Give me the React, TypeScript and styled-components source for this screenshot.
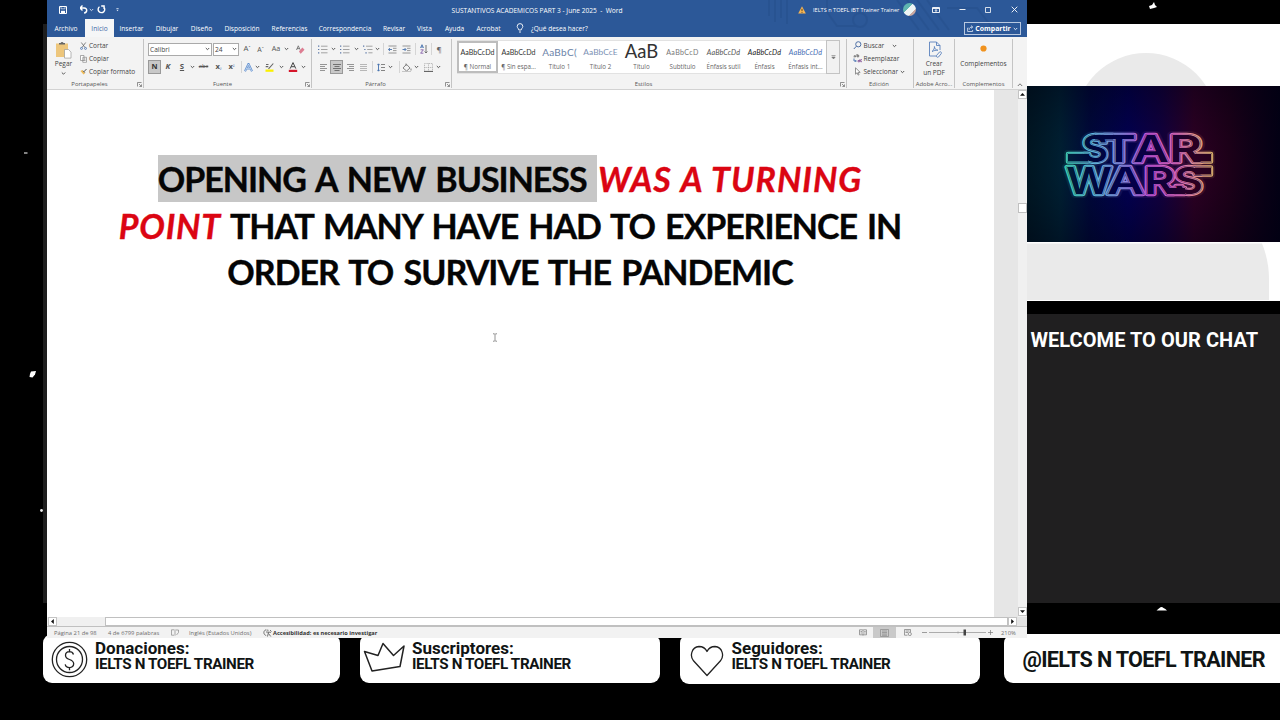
import React from "react";
import styled, { createGlobalStyle, css } from "styled-components";

const Global = createGlobalStyle`
  body { margin: 0; background: #000; overflow: hidden; }
  * { box-sizing: border-box; }
  svg { display: block; flex: none; }
`;

const ui = `"Open Sans", "Noto Sans", sans-serif`;

const Stage = styled.div`
  width: 1280px; height: 720px; overflow: hidden; background: #000;
  display: flex; flex-direction: column; font-family: ${ui};
`;
const Top = styled.div`display: flex; height: 638px; flex: none;`;
const LeftStrip = styled.div`width: 47px; display: flex; justify-content: space-between;`;
const Edge = styled.div`width: 4px; height: 579px; margin-top: 24px; background: #1e1e1e;`;

/* ---------- word processor window ---------- */
const Window = styled.main`
  width: 980px; height: 638px; display: flex; flex-direction: column;
  background: #f3f3f3; position: relative; z-index: 1; color: #444; font-size: 6.6px; white-space: nowrap;
`;
const BlueHead = styled.header`height: 37px; background: #2c5898; color: #fff; position: relative;`;
const Pattern = styled.svg`position: absolute; left: 700px; top: 0;`;
const TitleBar = styled.div`height: 19px; display: flex; align-items: center; position: relative;`;
const TabBar = styled.nav`height: 18px; display: flex; position: relative;`;
const Tab = styled.div<{ $w: number; $active?: boolean }>`
  width: ${p => p.$w}px; height: 18px; line-height: 19px; text-align: center;
  ${p => p.$active && css`background: #f5f6f7; color: #3f67a5;`}
`;
const Ask = styled.div`display: flex; align-items: center; width: 99px; gap: 7px; padding-left: 10px; font-size: 6.5px;`;
const Share = styled.button`
  margin: 3px 6.5px 0 auto; width: 57px; height: 13px; padding: 0 2px; border: 1px solid #b8c8e0; background: none;
  color: #fff; font: 700 6.9px/11px ${ui}; display: flex; align-items: center; justify-content: space-between;
`;

const Slot = styled.div<{ $w: number; $end?: boolean }>`
  width: ${p => p.$w}px; flex: none; display: flex; align-items: ${p => (p.$end ? "flex-end" : "center")}; justify-content: center;
`;
const Title = styled.div`width: 272px; flex: none; text-align: center; font-size: 6.6px; padding-top: 2px; white-space: pre;`;
const UserName = styled.div`width: 95px; flex: none; font-size: 5.6px; padding-left: 5px;`;
const Avatar = styled.div`
  width: 13px; height: 13px; flex: none; border-radius: 50%;
  background: linear-gradient(135deg, #5fb5b0 0 40%, #eef5f5 42% 70%, #c9a9a2 72%);
`;

const Ribbon = styled.section`height: 53px; display: flex; background: #f3f3f3; border-bottom: 1px solid #d2d2d2; padding-top: 2px;`;
const Group = styled.div<{ $w: number }>`
  width: ${p => p.$w}px; height: 49px; flex: none; border-right: 1px solid #c4c4c4;
  display: flex; flex-direction: column;
`;
const GroupBody = styled.div`height: 41px; display: flex;`;
const GroupFoot = styled.div<{ $pad?: number }>`
  height: 8px; line-height: 9px; font-size: 5.9px; text-align: center; color: #555;
  display: flex; justify-content: center; position: relative; padding-right: ${p => p.$pad ?? 0}px;
`;
const Launch = styled.svg`position: absolute; right: 1px; top: 2px;`;
const Stack = styled.div<{ $top?: number }>`display: flex; flex-direction: column; padding-top: ${p => p.$top ?? 0}px;`;
const Command = styled.div`
  height: 13.2px; display: flex; align-items: center; gap: 2px; line-height: 13px; font-size: 6.5px;
`;
const BigButton = styled.div<{ $w: number }>`
  width: ${p => p.$w}px; display: flex; flex-direction: column; align-items: center; padding-top: 2px; line-height: 9px; font-size: 6.5px;
`;
const ToolRow = styled.div`height: 18px; display: flex; align-items: center;`;
const Field = styled.div<{ $w: number }>`
  width: ${p => p.$w}px; height: 13px; background: #fff; border: 1px solid #aaa; padding: 0 1px;
  display: flex; align-items: center; justify-content: space-between; font-size: 6.6px; margin-right: 1px;
`;
const Pressed = styled.div`
  width: 13px; height: 14px; background: #c8c8c8; border: 1px solid #999;
  display: flex; align-items: center; justify-content: center;
`;
const Glyph = styled.span<{ $size?: number; $color?: string; $bold?: boolean; $italic?: boolean; $deco?: string }>`
  font-size: ${p => p.$size ?? 7.8}px; color: ${p => p.$color ?? "#555"}; line-height: 1;
  font-weight: ${p => (p.$bold ? 700 : 400)}; font-style: ${p => (p.$italic ? "italic" : "normal")};
  text-decoration: ${p => p.$deco ?? "none"};
`;
const Divider = styled.div`width: 1px; height: 12px; background: #d5d5d5; flex: none;`;

const Gallery = styled.div`margin: 1px 0 0 5px; height: 34px; display: flex; background: #fff; border-top: 1px solid #e2e2e2; border-bottom: 1px solid #e2e2e2;`;
const StyleCard = styled.div<{ $on?: boolean }>`
  width: 41px; height: 32px; display: flex; flex-direction: column; justify-content: space-between;
  overflow: hidden; text-align: center; padding: 0 1px 1px;
  ${p => p.$on && css`outline: 2px solid #bdbdbd; outline-offset: -2px;`}
`;
const Sample = styled.div<{ $size: number; $color: string; $italic?: boolean; $ls?: number; $up?: number }>`
  height: 21px; line-height: ${p => 23 - (p.$up ?? 0)}px; font-family: Lato, sans-serif; font-size: ${p => p.$size}px; color: ${p => p.$color};
  font-style: ${p => (p.$italic ? "italic" : "normal")}; letter-spacing: ${p => p.$ls ?? 0}px; overflow: hidden;
`;
const SampleName = styled.div`font-size: 6.2px; line-height: 9px; height: 10px; color: #666;`;
const GalleryMore = styled.div`width: 14px; height: 34px; margin-top: -1px; border: 1px solid #c3c3c3; background: #f1f1f1; display: flex; align-items: center; justify-content: center;`;

const DocArea = styled.div`height: 527px; display: flex; background: #e6e6e6;`;
const Page = styled.article`width: 947px; background: #fff; padding: 65px 21px 0 0;`;
const Line = styled.p<{ $ls: number }>`
  margin: 0; height: 46.6px; line-height: 48px; text-align: center; color: #050505;
  font-family: Lato, Carlito, sans-serif; font-weight: 700; font-size: 34px; -webkit-text-stroke: 0.35px currentColor;
  letter-spacing: ${p => p.$ls}px; word-spacing: 3px; white-space: pre;
`;
const Marked = styled.span`background: #c7c7c7; display: inline-block; height: 46.6px; vertical-align: top; margin-right: 1px;`;
const Red = styled.em<{ $ls: number }>`color: #db0512; letter-spacing: ${p => p.$ls}px; word-spacing: 1.2px;`;
const Caret = styled.svg`margin: 38px 0 0 445px;`;
const VScroll = styled.div`width: 9px; margin-left: auto; background: #f0f0f0; display: flex; flex-direction: column;`;
const ScrollButton = styled.div<{ $top?: number }>`
  width: 9px; height: 9px; margin-top: ${p => p.$top ?? 0}px; background: #fff; border: 1px solid #c4c4c4;
  display: flex; align-items: center; justify-content: center; flex: none;
`;
const Thumb = styled.div`width: 9px; height: 10px; margin-top: 104px; background: #fff; border: 1px solid #c0c0c0;`;
const HScroll = styled.div`height: 10px; display: flex; padding-left: 1px; background: #f0f0f0; border-bottom: 1px solid #c0c0c0;`;
const HThumb = styled.div`width: 903px; margin-left: 48px; height: 9px; background: #fff; border: 1px solid #c0c0c0;`;
const Corner = styled.div`flex: 1; background: #e3e3e3;`;
const Status = styled.footer`height: 11px; display: flex; align-items: center; background: #f2f2f2; font-size: 5.8px; color: #6d6d6d; padding-left: 7px;`;
const StatusItem = styled.span<{ $w: number; $bold?: boolean }>`
  width: ${p => p.$w}px; flex: none; ${p => p.$bold && css`font-weight: 700; color: #333; font-size: 5.65px;`}
`;
const ViewOn = styled(Slot)`height: 11px; background: #c9c9c9;`;

/* ---------- stream overlay ---------- */
const Side = styled.aside`width: 253px; display: flex; flex-direction: column;`;
const Chat = styled.section`
  margin-top: 13px; height: 289px; background: #201f20; color: #fff; padding: 14px 0 0 3.5px;
  font: 700 20px/24px Roboto, sans-serif; white-space: nowrap; letter-spacing: 0.05px;
`;
const Cards = styled.div`display: flex; margin: -4px 0 0 43px; align-items: flex-start;`;
const Card = styled.section<{ $w: number; $gap?: number; $h?: number }>`
  width: ${p => p.$w}px; height: ${p => p.$h ?? 49}px; flex: none; margin-left: ${p => p.$gap ?? 0}px;
  background: #fff; border-radius: 9px; display: flex; color: #101414; font-family: Roboto, sans-serif;
  font-weight: 700; white-space: nowrap;
`;
const CardIcon = styled.div<{ $w: number; $x: number; $y: number }>`width: ${p => p.$w}px; padding: ${p => p.$y}px 0 0 ${p => p.$x}px; flex: none;`;
const CardText = styled.div<{ $top: number }>`padding-top: ${p => p.$top}px;`;
const CardTitle = styled.div<{ $h: number }>`font-size: 17px; height: ${p => p.$h}px; line-height: 16px;`;
const CardName = styled.div`font-size: 15.2px; line-height: 16px; letter-spacing: -0.38px;`;
const Handle = styled.div`font-size: 21.6px; letter-spacing: -0.65px; line-height: 26px; padding: 13px 0 0 18.5px;`;

const Down = ({ c = "#555" }: { c?: string }) => (
  <svg width="5" height="4" viewBox="0 0 5 4"><path d="M.8 1l1.700 1.700L4.200 1" fill="none" stroke={c} strokeWidth="1" /></svg>
);
const Arrow = ({ r }: { r: number }) => (
  <svg width="5" height="5" viewBox="0 0 5 5"><path d="M0 3.800h5L2.500 1z" fill="#111" transform={`rotate(${r} 2.5 2.5)`} /></svg>
);
const Corner45 = () => (
  <Launch width="5" height="5" viewBox="0 0 5 5"><path d="M.5 4.500v-4h4M2 2l2.300 2.300M4.500 2.400v2.100H2.400" fill="none" stroke="#666" strokeWidth=".7" /></Launch>
);
const Lines = ({ rows, c = "#8a8a8a", w = 8 }: { rows: [number, number][]; c?: string; w?: number }) => (
  <svg width={w} height="9" viewBox={`0 0 ${w} 9`}>
    {rows.map(([x, l], i) => <path key={i} d={`M${x} ${1.5 + i * 2}h${l}`} stroke={c} strokeWidth=".9" />)}
  </svg>
);
const ListIcon = ({ step = 0 }: { step?: number }) => (
  <svg width="10" height="9" viewBox="0 0 10 9">
    {[1.2, 4.5, 7.8].map((y, i) => (
      <g key={y}><path d={`M${i * step} ${y}h1.300`} stroke="#5c79a8" strokeWidth="1.200" /><path d={`M${3 + i * step} ${y}H9.500`} stroke="#8e8e8e" strokeWidth=".8" /></g>
    ))}
  </svg>
);
const Indent = ({ flip }: { flip?: boolean }) => (
  <svg width="9" height="9" viewBox="0 0 9 9">
    <path d="M.5 1h8M.5 8h8M5 3.300h3.500M5 5.600h3.500" stroke="#8c8c8c" strokeWidth=".9" />
    <path d={flip ? "M.5 4.500h3.300M2.600 3l1.400 1.500L2.600 6" : "M4 4.500H.7M1.900 3L.5 4.500 1.900 6"} fill="none" stroke="#4470ae" strokeWidth=".9" />
  </svg>
);

const samples: { name: string; text: string; size: number; color: string; italic?: boolean; ls?: number; on?: boolean; up?: number }[] = [
  { name: "¶ Normal", text: "AaBbCcDd", size: 7.1, color: "#333", on: true },
  { name: "¶ Sin espa...", text: "AaBbCcDd", size: 7.1, color: "#333" },
  { name: "Título 1", text: "AaBbC(", size: 10, color: "#6b83a8", ls: 0.3 },
  { name: "Título 2", text: "AaBbCcE", size: 8.4, color: "#7c91b4", ls: 0.05 },
  { name: "Título", text: "AaB", size: 18.5, color: "#333", up: 3 },
  { name: "Subtítulo", text: "AaBbCcD", size: 7.1, color: "#777", ls: 0.35 },
  { name: "Énfasis sutil", text: "AaBbCcDd", size: 7.2, color: "#555", italic: true, ls: 0.1 },
  { name: "Énfasis", text: "AaBbCcDd", size: 7.2, color: "#222", italic: true, ls: 0.1 },
  { name: "Énfasis int...", text: "AaBbCcDd", size: 7.2, color: "#4a6fb5", italic: true, ls: 0.1 },
];

const tabs: [string, number][] = [["Archivo", 38], ["Inicio", 29], ["Insertar", 35], ["Dibujar", 36], ["Diseño", 33], ["Disposición", 48], ["Referencias", 47], ["Correspondencia", 64], ["Revisar", 34], ["Vista", 27], ["Ayuda", 33], ["Acrobat", 35]];

const Head = () => (
  <BlueHead>
    <Pattern width="280" height="37" viewBox="0 0 280 37">
      <g stroke="#234a86" strokeWidth="2" fill="none" opacity=".35">
        <path d="M22 0v16M28 0v22M34 0v18M40 0v24M80 0v12l10 14h20M150 0l22 30M160 0l22 30M170 0l22 30M180 0l22 30" />
        <circle cx="113" cy="20" r="7" /><path d="M200 8h30l14 18" />
      </g>
    </Pattern>
    <TitleBar>
      <Slot $w={32}><svg width="8" height="8" viewBox="0 0 8 8"><path d="M.5.500h7v7h-7z" fill="none" stroke="#fff" /><path d="M2 4.800h4V8H2z" fill="#fff" /><path d="M2 .5v2.300h4V.5" fill="none" stroke="#fff" strokeWidth=".6" /></svg></Slot>
      <Slot $w={1} />
      <Slot $w={8}><svg width="9" height="9" viewBox="0 0 9 9" fill="none" stroke="#fff" strokeWidth="1.400"><path d="M3.500.600L1.100 3l2.400 2.400M1.300 3h3.800c3.700 0 3.300 4.700 0 5" transform="translate(-1 0)" /></svg></Slot>
      <Slot $w={6}><Down c="#cfdaec" /></Slot>
      <Slot $w={15}><svg width="9" height="9" viewBox="0 0 9 9" fill="none" stroke="#fff" strokeWidth="1.400"><path d="M2.500 1.700a3.300 3.300 0 1 0 4 .1M4.200 1h2.900v3" /></svg></Slot>
      <Slot $w={16}><svg width="3" height="4" viewBox="0 0 4 5" fill="#dce5f2"><path d="M.5 0h3v1h-3zM.5 2h3L2 4z" /></svg></Slot>
      <Slot $w={276} />
      <Title>{"SUSTANTIVOS ACADEMICOS PART 3 - June 2025  -  Word"}</Title>
      <Slot $w={123} />
      <Slot $w={12}><svg width="8" height="8" viewBox="0 0 8 8"><path d="M4 .3L7.800 7.500H.2z" fill="#f5b455" /><path d="M4 2.800v2.400M4 6v.8" stroke="#4d3a17" strokeWidth=".9" /></svg></Slot>
      <UserName>IELTS n TOEFL iBT Trainer Trainer</UserName>
      <Avatar />
      <Slot $w={39}><svg width="8" height="6" viewBox="0 0 8 6" fill="none" stroke="#fff" strokeWidth=".9"><path d="M.5.500h7v5h-7zM.5 1.500h7M4 5V2.700M3 3.700l1-1 1 1" /></svg></Slot>
      <Slot $w={14}><svg width="7" height="7" viewBox="0 0 7 7"><path d="M.5 3.500h6" stroke="#fff" strokeWidth=".9" /></svg></Slot>
      <Slot $w={38}><svg width="6" height="6" viewBox="0 0 6 6"><path d="M.5.500h5v5h-5z" fill="none" stroke="#fff" strokeWidth=".8" /></svg></Slot>
      <Slot $w={14}><svg width="7" height="7" viewBox="0 0 7 7"><path d="M.7.700l5.600 5.600M6.300.700L.7 6.300" stroke="#fff" strokeWidth=".9" /></svg></Slot>
    </TitleBar>
    <TabBar>
      {tabs.map(([t, w]) => <Tab key={t} $w={w} $active={t === "Inicio"}>{t}</Tab>)}
      <Ask>
        <svg width="8" height="10" viewBox="0 0 8 10" fill="none" stroke="#fff" strokeWidth=".9"><path d="M2.800 7C2.800 5.500 1.200 5 1.200 3.400a2.800 2.800 0 0 1 5.600 0C6.800 5 5.200 5.500 5.200 7zM3 9h2" /></svg>
        ¿Qué desea hacer?
      </Ask>
      <Share>
        <svg width="7" height="7" viewBox="0 0 7 7" fill="none" stroke="#dce6f4" strokeWidth=".8"><path d="M1.500 3H.6v3.500h5V5M2.200 4.800c0-2 1.200-2.800 3-2.800M4 .6L5.800 2 4 3.500" /></svg>
        Compartir<Down c="#dce6f4" />
      </Share>
    </TabBar>
  </BlueHead>
);

const Clipboard = () => (
  <Group $w={97}>
    <GroupBody>
      <BigButton $w={33}>
        <svg width="17" height="18" viewBox="0 0 17 18"><path d="M1 2.500h12V16H1z" fill="#edc67c" /><path d="M4 3.500V2h1.600a1.500 1.500 0 0 1 2.900 0H10v1.500z" fill="#666" /><path d="M9.500 8.500h4l2.500 2.600v6H9.500z" fill="#fff" stroke="#999" strokeWidth=".7" /></svg>
        Pegar
        <Slot $w={6}><svg width="5" height="8" viewBox="0 0 5 8"><path d="M.8 4.500l1.700 1.700 1.700-1.700" fill="none" stroke="#555" /></svg></Slot>
      </BigButton>
      <Stack>
        <Command><svg width="7" height="8" viewBox="0 0 7 8" fill="none" stroke="#666" strokeWidth=".8"><path d="M1.300.500L5 5.500M5.700.500L2 5.500" /><circle cx="1.500" cy="6.400" r="1" stroke="#4470ae" /><circle cx="5.500" cy="6.400" r="1" stroke="#4470ae" /></svg>Cortar</Command>
        <Command><svg width="7" height="8" viewBox="0 0 7 8" fill="#fff" stroke="#888" strokeWidth=".7"><path d="M.5.500h3.500v5H.5zM2.800 2.300H6.500v5H2.800zM3.800 4h1.800M3.800 5.500h1.800" /></svg>Copiar</Command>
        <Command><svg width="7" height="8" viewBox="0 0 7 8"><path d="M.5 3l3 3.500L5 5.300 2.300 2z" fill="#eebb58" /><path d="M3.200 2.800L4.800 4.600M4 3.700L6.500 1" stroke="#555" strokeWidth="1" /></svg>Copiar formato</Command>
      </Stack>
    </GroupBody>
    <GroupFoot $pad={11}>Portapapeles<Corner45 /></GroupFoot>
  </Group>
);

const FontGroup = () => (
  <Group $w={168}>
    <GroupBody>
      <Stack $top={1}>
        <ToolRow>
          <Slot $w={4} />
          <Field $w={64}>Calibri<Down /></Field>
          <Field $w={26}>24<Down /></Field>
          <Slot $w={14}><Glyph>A</Glyph><Glyph $size={5}>ˆ</Glyph></Slot>
          <Slot $w={13}><Glyph $size={7}>A</Glyph><Glyph $size={5}>ˇ</Glyph></Slot>
          <Slot $w={18}><Glyph $size={7.2}>Aa</Glyph></Slot>
          <Slot $w={2}><Down /></Slot>
          <Slot $w={26}><svg width="9" height="9" viewBox="0 0 9 9"><path d="M3 6.200l3.400-3.600L8.500 4.800 5 8.400H4.200z" fill="#dd7d92" /><path d="M.5 5L2.300.800 4 4.600M1 3.600h2.500" stroke="#666" strokeWidth=".8" fill="none" /></svg></Slot>
        </ToolRow>
        <ToolRow>
          <Slot $w={4} />
          <Pressed><Glyph $bold $color="#333" $size={7.4}>N</Glyph></Pressed>
          <Slot $w={14}><Glyph $bold $italic>K</Glyph></Slot>
          <Slot $w={14}><Glyph $bold $deco="underline">S</Glyph></Slot>
          <Slot $w={6}><Down /></Slot>
          <Slot $w={17}><Glyph $size={5.8} $deco="line-through">abc</Glyph></Slot>
          <Slot $w={13}><Glyph $bold $size={7.6}>x</Glyph><Glyph $size={5} $color="#4470ae">₂</Glyph></Slot>
          <Slot $w={13}><Glyph $bold $size={7.6}>x</Glyph><Glyph $size={5} $color="#4470ae">²</Glyph></Slot>
          <Slot $w={3} /><Divider />
          <Slot $w={13}><svg width="9" height="9" viewBox="0 0 9 9"><path d="M1 8.200L4.500.800 8 8.200M2.400 5.600h4.200" fill="none" stroke="#5f8fd0" strokeWidth="2" /><path d="M1.200 8L4.500 1 7.800 8M2.600 5.600h3.800" fill="none" stroke="#eef3fa" strokeWidth=".6" /></svg></Slot>
          <Slot $w={4}><Down /></Slot>
          <Slot $w={21}><svg width="10" height="10" viewBox="0 0 10 10"><path d="M.5 7.500h8v2.300h-8z" fill="#fbf000" /><path d="M3.500 6.800l4.800-5.300M.7 4.600h2.600M1 2.500h2.500" stroke="#666" strokeWidth="1.100" /></svg></Slot>
          <Slot $w={3}><Down /></Slot>
          <Slot $w={19}><svg width="10" height="10" viewBox="0 0 10 10"><path d="M.8 7.800h8.400V10H.8z" fill="#d5162b" /><path d="M2.200 6.600L5 .6l2.800 6M3.200 4.700h3.600" fill="none" stroke="#444" strokeWidth="1" /></svg></Slot>
          <Slot $w={3}><Down /></Slot>
        </ToolRow>
      </Stack>
    </GroupBody>
    <GroupFoot $pad={10}>Fuente<Corner45 /></GroupFoot>
  </Group>
);

const Paragraph = () => (
  <Group $w={140}>
    <GroupBody>
      <Stack $top={1}>
        <ToolRow>
          <Slot $w={5} />
          <Slot $w={12}><ListIcon /></Slot><Slot $w={9}><Down /></Slot>
          <Slot $w={14}><ListIcon /></Slot><Slot $w={8}><Down /></Slot>
          <Slot $w={15}><ListIcon step={1.2} /></Slot><Slot $w={5}><Down /></Slot>
          <Slot $w={3} /><Divider />
          <Slot $w={16}><Indent /></Slot><Slot $w={12}><Indent flip /></Slot>
          <Slot $w={3} /><Divider />
          <Slot $w={15}><svg width="8" height="10" viewBox="0 0 8 10" fill="none" strokeWidth=".9"><path d="M.5 4L2 .7 3.500 4M1 3h2" stroke="#4470ae" /><path d="M.6 5.800h2.800L.6 9.200h2.800" stroke="#8660a8" /><path d="M6 1v8M4.600 7.500L6 9l1.400-1.500" stroke="#666" /></svg></Slot>
          <Divider />
          <Slot $w={14}><Glyph $size={8} $color="#666">¶</Glyph></Slot>
        </ToolRow>
        <ToolRow>
          <Slot $w={4} />
          <Slot $w={14}><Lines rows={[[0, 7], [0, 5], [0, 7], [0, 5]]} w={7} /></Slot>
          <Pressed><Lines rows={[[0, 8], [1.5, 5], [0, 8], [1.5, 5]]} c="#666" /></Pressed>
          <Slot $w={14}><Lines rows={[[0, 7], [2, 5], [0, 7], [2, 5]]} w={7} /></Slot>
          <Slot $w={13}><Lines rows={[[0, 7], [0, 7], [0, 7], [0, 7]]} c="#b0b0b0" w={7} /></Slot>
          <Slot $w={2} /><Divider />
          <Slot $w={15}><svg width="8" height="9" viewBox="0 0 8 9" fill="none"><path d="M1.500 1v7M.3 2.200L1.500.800l1.200 1.400M.3 6.800l1.200 1.400 1.200-1.400" stroke="#4470ae" strokeWidth=".9" /><path d="M4 1.500h4M4 4.500h4M4 7.500h4" stroke="#777" strokeWidth=".9" /></svg></Slot>
          <Slot $w={5}><Down /></Slot>
          <Slot $w={6} /><Divider />
          <Slot $w={13}><svg width="10" height="9" viewBox="0 0 10 9" fill="none" stroke="#777" strokeWidth=".9"><path d="M1 5l3.500-3.700L8 5 4.600 8zM4 3V.5M9 5.500v2" /><path d="M0 8.600h9" stroke="#bbb" /></svg></Slot>
          <Slot $w={7}><Down /></Slot>
          <Slot $w={16}><svg width="9" height="9" viewBox="0 0 9 9" fill="none"><path d="M.5 8.500v-8h8v8M4.500.500v8M.5 4.500h8" stroke="#a5a5a5" strokeWidth=".8" strokeDasharray="1 .8" /><path d="M0 8.400h9" stroke="#555" strokeWidth="1" /></svg></Slot>
          <Slot $w={5}><Down /></Slot>
        </ToolRow>
      </Stack>
    </GroupBody>
    <GroupFoot $pad={12}>Párrafo<Corner45 /></GroupFoot>
  </Group>
);

const Styles = () => (
  <Group $w={395}>
    <GroupBody>
      <Gallery>
        {samples.map(s => (
          <StyleCard key={s.name} $on={s.on}>
            <Sample $size={s.size} $color={s.color} $italic={s.italic} $ls={s.ls} $up={s.up}>{s.text}</Sample>
            <SampleName>{s.name}</SampleName>
          </StyleCard>
        ))}
        <GalleryMore><svg width="5" height="5" viewBox="0 0 5 5"><path d="M.5.500h4M.8 2l1.700 2 1.700-2z" stroke="#777" strokeWidth=".6" fill="#777" /></svg></GalleryMore>
      </Gallery>
    </GroupBody>
    <GroupFoot $pad={11}>Estilos<Corner45 /></GroupFoot>
  </Group>
);

const Editing = () => (
  <Group $w={67}>
    <GroupBody>
      <Slot $w={5.5} />
      <Stack>
        <Command><svg width="9" height="9" viewBox="0 0 9 9" fill="none" stroke="#4d6fa6" strokeWidth="1"><circle cx="5.300" cy="3.300" r="2.600" /><path d="M3.400 5.200L.8 8" /></svg>Buscar<Slot $w={17}><Down /></Slot></Command>
        <Command><svg width="9" height="9" viewBox="0 0 9 9" fill="none" strokeWidth=".9"><path d="M.6 2.800h2v-1H.9M4 0v2.800h1.700V1.200H4" stroke="#666" /><path d="M1 4.500V7h2M2.400 6l.9 1-.9 1" stroke="#4470ae" /><path d="M6.500 5.500v2.300H5V6.500h1.500M9 5.700H7.600v2H9" stroke="#8a5a9a" /></svg>Reemplazar</Command>
        <Command><svg width="9" height="9" viewBox="0 0 9 9" fill="#fff" stroke="#777" strokeWidth=".8"><path d="M2.500.800v6.400l1.600-1.500 1 2.400 1-.5-1-2.200h2.100z" /></svg>Seleccionar<Down /></Command>
      </Stack>
    </GroupBody>
    <GroupFoot $pad={2}>Edición</GroupFoot>
  </Group>
);

const RibbonBar = () => (
  <Ribbon>
    <Clipboard /><FontGroup /><Paragraph /><Styles /><Editing />
    <Group $w={41}>
      <GroupBody>
        <BigButton $w={41}>
          <svg width="16" height="18" viewBox="0 0 16 18" fill="none" stroke="#5b82bd" strokeWidth=".9"><path d="M10.500 15H3.500V1h7l3.500 3.500V9M10.500 1v3.500H14" /><path d="M6 10.500c2-1.500 2.600-3.500 2.400-5 .2 2.500 1.600 3.500 3.500 3.700-2 0-4 .3-5.900 1.300z" /><path d="M10.500 14.500l3-3.500c1-1 2.500.5 1.700 1.700L12.500 16c-1.200 1-2.600-.6-2-1.500z" /></svg>
          Crear<span>un PDF</span>
        </BigButton>
      </GroupBody>
      <GroupFoot>Adobe Acro...</GroupFoot>
    </Group>
    <Group $w={58}>
      <GroupBody>
        <BigButton $w={57}>
          <svg width="16" height="18" viewBox="0 0 16 18"><circle cx="7.500" cy="7.500" r="3.100" fill="#f0921e" /></svg>
          Complementos
        </BigButton>
      </GroupBody>
      <GroupFoot>Complementos</GroupFoot>
    </Group>
    <Slot $w={14} $end><svg width="6" height="7" viewBox="0 0 6 7"><path d="M.8 4L3 1.800 5.200 4" fill="none" stroke="#666" strokeWidth=".9" /></svg></Slot>
  </Ribbon>
);

const Document = () => (
  <>
    <DocArea>
      <Page>
        <Line $ls={-1}><Marked>{"OPENING A NEW BUSINESS "}</Marked><Red $ls={1}>WAS A TURNING</Red></Line>
        <Line $ls={-1.08}><Red $ls={0.75}>POINT</Red>{" THAT MANY HAVE HAD TO EXPERIENCE IN"}</Line>
        <Line $ls={-0.98}>ORDER TO SURVIVE THE PANDEMIC</Line>
        <Caret width="6" height="9" viewBox="0 0 6 9"><path d="M1 .8h1.500L3 1.300l.5-.5H5M3 1.300v6.400M1 8.200h1.500L3 7.700l.5.500H5" fill="none" stroke="#777" strokeWidth=".8" /></Caret>
      </Page>
      <VScroll>
        <ScrollButton><Arrow r={0} /></ScrollButton>
        <Thumb />
        <ScrollButton $top={394}><Arrow r={180} /></ScrollButton>
      </VScroll>
    </DocArea>
    <HScroll>
      <ScrollButton><Arrow r={-90} /></ScrollButton>
      <HThumb />
      <ScrollButton><Arrow r={90} /></ScrollButton>
      <Corner />
    </HScroll>
    <Status>
      <StatusItem $w={54}>Página 21 de 98</StatusItem>
      <StatusItem $w={63}>4 de 6799 palabras</StatusItem>
      <StatusItem $w={18}><svg width="8" height="7" viewBox="0 0 8 7" fill="none" stroke="#888" strokeWidth=".7"><path d="M3 .8H.5v5.400H3M4 .3v6.400M5 1h2.500v2.500L5.500 6" /></svg></StatusItem>
      <StatusItem $w={74}>Inglés (Estados Unidos)</StatusItem>
      <StatusItem $w={10}><svg width="9" height="8" viewBox="0 0 9 8" fill="none" stroke="#555" strokeWidth=".8"><path d="M3 .8C0 1.500.3 6 3.200 6.500M3.500 1l2 .3M3 3l5 .300M5.500 3.200L4.500 7.500M5.500 4.500l2.300 3M7 1l1.500 1.500" /></svg></StatusItem>
      <StatusItem $w={580} $bold>Accesibilidad: es necesario investigar</StatusItem>
      <Slot $w={20}><svg width="8" height="7" viewBox="0 0 8 7" fill="none" stroke="#777" strokeWidth=".7"><path d="M4 1v5.500M.5.800h3L4 1l.5-.2h3v5h-3L4 6.200l-.5-.4h-3zM1.500 2.500h1.500M1.500 4h1.500M5.200 2.500h1.500M5.200 4h1.500" /></svg></Slot>
      <ViewOn $w={23}><svg width="9" height="8" viewBox="0 0 9 8" fill="none" stroke="#8a8a8a" strokeWidth=".7"><path d="M.5.500h8v7h-8zM2 2h5M2 3.500h5M2 5h5M2 6.300h5" /></svg></ViewOn>
      <Slot $w={23}><svg width="8" height="7" viewBox="0 0 8 7" fill="none" stroke="#777" strokeWidth=".7"><path d="M.5 6.200V.500h6v2.500M1.500 2h4M1.500 3.500h2.500M.5 6.200h3" /><circle cx="5.800" cy="5" r="1.600" /></svg></Slot>
      <Slot $w={77}><svg width="72" height="7" viewBox="0 0 72 7"><path d="M0 3.500h5M66 3.500h5M68.500 1v5" stroke="#777" strokeWidth=".7" /><path d="M7 3.500h57M36 2.500v2" stroke="#999" strokeWidth=".8" /><path d="M41.500 .5h2.500v6h-2.500z" fill="#444" /></svg></Slot>
      <Slot $w={5} />
      <StatusItem $w={20}>210%</StatusItem>
    </Status>
  </>
);

type Letter = [string, number, number, number];
const letters: Letter[] = [
  ["S", 55, 75.5, 26], ["T", 75, 75.5, 34], ["A", 106, 75.5, 36], ["R", 142, 75.5, 33],
  ["W", 39, 108, 46], ["A", 80, 108, 37], ["R", 117, 108, 31], ["S", 147, 108, 29],
];

const NeonPicture = () => (
  <svg width="253" height="156" viewBox="0 0 253 156">
    <defs>
      <linearGradient id="sky" gradientUnits="userSpaceOnUse" x1="0" y1="0" x2="253" y2="0">
        <stop offset="0" stopColor="#001f2a" /><stop offset=".13" stopColor="#002538" /><stop offset=".25" stopColor="#00083c" />
        <stop offset=".4" stopColor="#02004b" /><stop offset=".53" stopColor="#10003a" /><stop offset=".66" stopColor="#2a0022" />
        <stop offset=".8" stopColor="#1f0019" /><stop offset="1" stopColor="#040016" />
      </linearGradient>
      <radialGradient id="fade" cx=".5" cy=".5" r=".75"><stop offset=".3" stopColor="#000010" stopOpacity="0" /><stop offset="1" stopColor="#000010" stopOpacity=".6" /></radialGradient>
      <linearGradient id="neon" gradientUnits="userSpaceOnUse" x1="39" y1="80" x2="186" y2="70">
        <stop offset="0" stopColor="#3fd9b5" /><stop offset=".2" stopColor="#62b8de" /><stop offset=".4" stopColor="#8a85e0" />
        <stop offset=".55" stopColor="#c455d8" /><stop offset=".75" stopColor="#e068bc" /><stop offset=".9" stopColor="#e59a8a" /><stop offset="1" stopColor="#e5b866" />
      </linearGradient>
      <g id="mark">
        <path d="M41 68h20v7.500H41zM168 68h16v7.500h-16zM168 81.500h16v7h-16zM68 49h18v4.500H68zM140 102h18v6h-18z" />
        {letters.map(([t, x, y, w], i) => (
          <text key={i} x={x} y={y} textLength={w} lengthAdjust="spacingAndGlyphs" fontFamily="Inter, sans-serif" fontWeight="600" fontSize="37">{t}</text>
        ))}
      </g>
    </defs>
    <rect width="253" height="156" fill="url(#sky)" />
    <rect width="253" height="156" fill="url(#fade)" />
    <g strokeLinejoin="round">
      <use href="#mark" fill="none" stroke="url(#neon)" strokeWidth="8" opacity=".1" />
      <use href="#mark" fill="none" stroke="url(#neon)" strokeWidth="4.400" />
      <use href="#mark" fill="none" stroke="#1b0f50" strokeOpacity=".5" strokeWidth="2.400" />
      <use href="#mark" fill="none" stroke="url(#neon)" strokeWidth="1" />
      <use href="#mark" fill="url(#sky)" />
    </g>
  </svg>
);

export default function App() {
  return (
    <Stage>
      <Global />
      <Top>
        <LeftStrip>
          <svg width="43" height="620" viewBox="0 0 43 620">
            <path d="M24 153h3.500" stroke="#bbb" strokeWidth="1.400" />
            <path d="M31 371.500l5-.5-1 3.500-2.500 3-3-.5.500-3z" fill="#fff" />
            <circle cx="41.500" cy="510.500" r="1.400" fill="#eee" />
          </svg>
          <Edge />
        </LeftStrip>
        <Window><Head /><RibbonBar /><Document /></Window>
        <Side>
          <svg width="253" height="86" viewBox="0 0 253 86">
            <path d="M122 6l3-1 2-3 1 3 2 2-3 1-4 1z" fill="#fff" />
            <rect y="24" width="253" height="62" fill="#fff" /><circle cx="119" cy="124" r="71" fill="#eaeaea" />
          </svg>
          <NeonPicture />
          <svg width="253" height="59" viewBox="0 0 253 59"><rect width="253" height="59" fill="#fff" /><path d="M0 1.500h235q7 17 7 36v20.500H0z" fill="#eaeaea" /></svg>
          <Chat>WELCOME TO OUR CHAT</Chat>
          <svg width="253" height="14" viewBox="0 0 253 14"><path d="M129.500 7.500q2-2 3-2.500 2-2 4 0 2 .5 3.500 2.500z" fill="#fff" /></svg>
        </Side>
      </Top>
      <Cards>
        <Card $w={296.5}>
          <CardIcon $w={52} $x={8} $y={7}>
            <svg width="37" height="37" viewBox="0 0 37 37" fill="none" stroke="#222" strokeWidth="1.300"><circle cx="18.500" cy="18.500" r="17.200" /><circle cx="18.500" cy="18.500" r="13" /><path d="M22.500 13.500q-1-2.800-4-2.800-4 .2-4 3.600 0 3 4 4.200t4.200 4.300q-.2 3.700-4.200 3.800-3.600 0-4.300-3.300M18.500 8v2.700M18.500 26.600v2.600" /></svg>
          </CardIcon>
          <CardText $top={5.5}><CardTitle $h={16.5}>Donaciones:</CardTitle><CardName>IELTS N TOEFL TRAINER</CardName></CardText>
        </Card>
        <Card $w={300} $gap={20.5}>
          <CardIcon $w={52} $x={3} $y={8}>
            <svg width="43" height="32" viewBox="0 0 43 32" fill="none" stroke="#222" strokeWidth="1.500"><path d="M1.500 9.500l13.500 4 5-12 10.500 12L41 4l-4 20.500L9 29z" strokeLinejoin="round" /></svg>
          </CardIcon>
          <CardText $top={5.5}><CardTitle $h={16.5}>Suscriptores:</CardTitle><CardName>IELTS N TOEFL TRAINER</CardName></CardText>
        </Card>
        <Card $w={300} $gap={19.5} $h={50}>
          <CardIcon $w={52} $x={10} $y={11}>
            <svg width="34" height="32" viewBox="0 0 34 32" fill="none" stroke="#222" strokeWidth="1.300"><path d="M17 30.500L3.500 15.800C-.5 11 1.500 2.200 9 1.500c4 0 6.500 2 8 5 1.500-3 4-5 8-5 7.500.700 9.500 9.500 5.500 14.300z" strokeLinejoin="round" /></svg>
          </CardIcon>
          <CardText $top={6}><CardTitle $h={16}>Seguidores:</CardTitle><CardName>IELTS N TOEFL TRAINER</CardName></CardText>
        </Card>
        <Card $w={290} $gap={24.5}><Handle>@IELTS N TOEFL TRAINER</Handle></Card>
      </Cards>
    </Stage>
  );
}
